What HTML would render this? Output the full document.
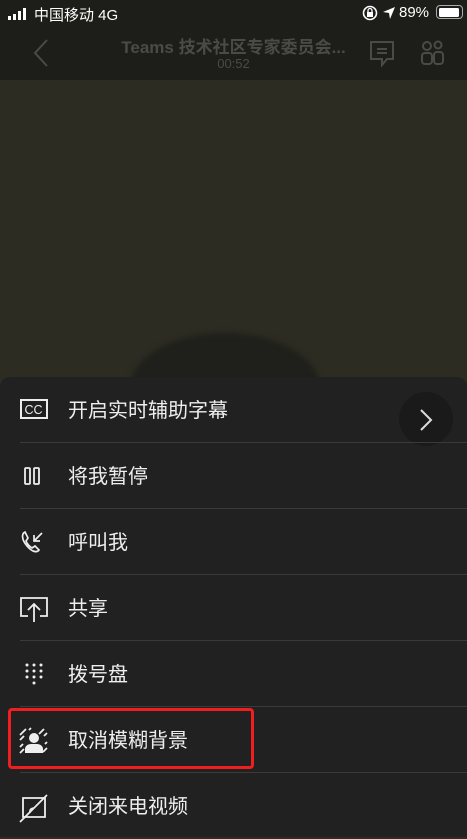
<!DOCTYPE html>
<html><head><meta charset="utf-8"><style>
*{margin:0;padding:0;box-sizing:border-box}
body{width:467px;height:829px;overflow:hidden;background:#2c2c22;font-family:"Liberation Sans","Noto Sans CJK SC",sans-serif;position:relative}
.hdr{position:absolute;left:0;top:0;width:467px;height:80px;background:#1d1d1a}
.st{position:absolute;top:4px;color:#fff;font-size:15px}
.title{position:absolute;top:33px;left:0;width:467px;text-align:center;color:#4a4a46;font-size:17px;font-weight:bold}
.time{position:absolute;top:56px;left:0;width:467px;text-align:center;color:#4a4a46;font-size:13px}
.sheet{position:absolute;left:0;top:377px;width:467px;height:460px;background:#212121;border-radius:10px 10px 0 0}
.row{position:absolute;left:0;width:467px;height:66px}
.row .t{position:absolute;left:68px;top:21px;color:#eee;font-size:20px;line-height:26px}
.row svg{position:absolute;left:18px;top:20px}
.sep{position:absolute;left:20px;right:0;height:1px;background:#3a3a3a}
</style></head><body>
<div class="hdr">
<div style="position:absolute;left:8px;top:8px;width:20px;height:12px">
<div style="position:absolute;left:0;bottom:0;width:3px;height:4px;background:#fff"></div>
<div style="position:absolute;left:5px;bottom:0;width:3px;height:6px;background:#fff"></div>
<div style="position:absolute;left:10px;bottom:0;width:3px;height:9px;background:#fff"></div>
<div style="position:absolute;left:15px;bottom:0;width:3px;height:12px;background:#fff"></div>
</div>
<div class="st" style="left:34px">中国移动 4G</div>
<svg style="position:absolute;left:362px;top:5px" width="16" height="16"><circle cx="8" cy="8" r="6.5" stroke="#fff" stroke-width="1.6" fill="none"/><rect x="5" y="7" width="6" height="5" fill="#fff"/><path d="M6 7V5.5a2 2 0 0 1 4 0V7" stroke="#fff" stroke-width="1.3" fill="none"/></svg>
<svg style="position:absolute;left:382px;top:6px" width="14" height="14"><path d="M13 1L1 6l6 1 1 6z" fill="#fff"/></svg>
<div class="st" style="left:399px">89%</div>
<div style="position:absolute;left:436px;top:5px;width:27px;height:14px;border:1.5px solid #aaa;border-radius:4px;padding:1.5px"><div style="width:20px;height:100%;background:#fff;border-radius:1.5px"></div></div>
<svg style="position:absolute;left:32px;top:38px" width="18" height="30"><path d="M15 2 L3 15 L15 28" stroke="#4a4a46" stroke-width="2" fill="none"/></svg>
<div class="title">Teams 技术社区专家委员会...</div>
<div class="time">00:52</div>
<svg style="position:absolute;left:369px;top:40px" width="28" height="28"><path d="M2 2h22v17h-6l-5 6v-6H2z M8 9h10 M8 13h10" stroke="#4a4a46" stroke-width="2" fill="none"/></svg>
<svg style="position:absolute;left:420px;top:40px" width="26" height="26"><circle cx="7" cy="6" r="4" stroke="#4a4a46" stroke-width="2" fill="none"/><circle cx="18" cy="5" r="3.5" stroke="#4a4a46" stroke-width="2" fill="none"/><rect x="2" y="13" width="10" height="11" rx="3" stroke="#4a4a46" stroke-width="2" fill="none"/><rect x="14" y="12" width="9" height="12" rx="3" stroke="#4a4a46" stroke-width="2" fill="none"/></svg>
</div>
<div style="position:absolute;left:130px;top:333px;width:190px;height:110px;border-radius:50%;background:#1f201b;filter:blur(3px)"></div>
<div class="sheet">
<div style="position:absolute;left:399px;top:15px;width:54px;height:54px;border-radius:50%;background:#1a1a1a"></div>
<svg style="position:absolute;left:418px;top:31px" width="16" height="24"><path d="M3 2l10 10L3 22" stroke="#ddd" stroke-width="2" fill="none"/></svg>
<div class="row" style="top:0"><svg width="32" height="26" style="left:19px"><rect x="2" y="3" width="26" height="18" stroke="#eee" stroke-width="2" fill="none"/><text x="5.5" y="17" fill="#eee" font-size="12.5" font-family="Liberation Sans">CC</text></svg><div class="t">开启实时辅助字幕</div></div>
<div class="sep" style="top:65px"></div>
<div class="row" style="top:66px"><svg width="30" height="26"><rect x="7" y="5" width="5" height="16" rx="1" stroke="#eee" stroke-width="1.8" fill="none"/><rect x="16" y="5" width="5" height="16" rx="1" stroke="#eee" stroke-width="1.8" fill="none"/></svg><div class="t">将我暂停</div></div>
<div class="sep" style="top:131px"></div>
<div class="row" style="top:132px"><svg width="30" height="28"><path d="M7 3C3 5 4 11 9 17c5 6 10 7 12 4l-4-4-3 2c-2-1-5-4-6-7l2-3z" stroke="#eee" stroke-width="1.7" fill="none"/><path d="M24 4l-8 8M16 6v6h6" stroke="#eee" stroke-width="1.7" fill="none"/></svg><div class="t">呼叫我</div></div>
<div class="sep" style="top:197px"></div>
<div class="row" style="top:198px"><svg width="32" height="30"><path d="M10 21H3V3h26v18h-7" stroke="#eee" stroke-width="1.8" fill="none"/><path d="M16 27V10M10 15l6-6 6 6" stroke="#eee" stroke-width="1.8" fill="none"/></svg><div class="t">共享</div></div>
<div class="sep" style="top:263px"></div>
<div class="row" style="top:264px"><svg width="30" height="30" fill="#eee"><circle cx="9" cy="4" r="1.5"/><circle cx="16" cy="4" r="1.5"/><circle cx="23" cy="4" r="1.5"/><circle cx="9" cy="10" r="1.5"/><circle cx="16" cy="10" r="1.5"/><circle cx="23" cy="10" r="1.5"/><circle cx="9" cy="16" r="1.5"/><circle cx="16" cy="16" r="1.5"/><circle cx="23" cy="16" r="1.5"/><circle cx="16" cy="22" r="1.5"/></svg><div class="t">拨号盘</div></div>
<div class="sep" style="top:329px"></div>
<div class="row" style="top:330px"><svg width="32" height="28"><g stroke="#eee" stroke-width="1.8"><path d="M2 8l6-6M2 13l4-4M11 3l2-2M26 2l-5 5M29 6l-3 3M2 26l4-4M2 20l3-3M29 21l-4 4M29 15l-2 2"/></g><circle cx="16" cy="11" r="5" fill="#eee"/><path d="M7 26v-4c0-3 3-5 6-5h6c3 0 6 2 6 5v4z" fill="#eee"/></svg><div class="t">取消模糊背景</div></div>
<div class="sep" style="top:395px"></div>
<div class="row" style="top:396px"><svg width="32" height="30"><path d="M5 5h22v19H5z" stroke="#eee" stroke-width="1.8" fill="none"/><path d="M2 29L29 2" stroke="#eee" stroke-width="1.8"/><path d="M12 20v-2c0-2 2-3 4-3" stroke="#eee" stroke-width="1.6" fill="none"/></svg><div class="t">关闭来电视频</div></div>
</div>
<div style="position:absolute;left:8px;top:708px;width:246px;height:61px;border:3px solid #f01e1e;border-radius:4px"></div>
</body></html>
